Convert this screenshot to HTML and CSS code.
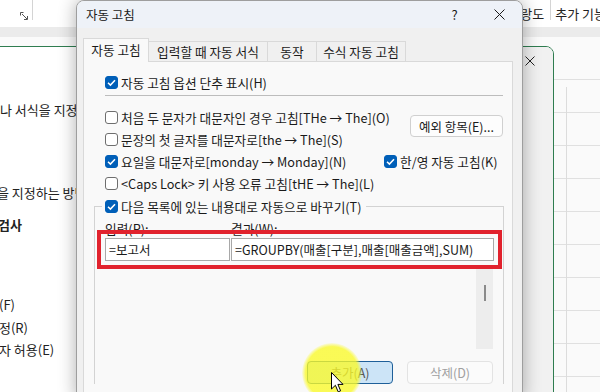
FILE: index.html
```html
<!DOCTYPE html>
<html>
<head>
    <title>자동 고침</title>
    <link rel="stylesheet" href="styles.css">
</head>
<body>
    <div class="screen">
        <header class="ribbon">
            <div class="rb-left">
                <svg class="launcher" width="8" height="8" viewBox="0 0 8 8">
                    <path d="M0.5 3.5 V0.5 H3.5 M2 2 L7 7 M4 7.5 H7.5 V4" fill="none" stroke="#555" stroke-width="1"/>
                </svg>
            </div>
            <div class="rb-right">
                <span class="rb-tab rb-sep">랑도</span>
                <span class="rb-tab">추가 기능</span>
            </div>
        </header>
        <div class="ribbon-foot"></div>
        <main class="sheet"></main>

        <section class="options-win">
            <div class="ow-content">
                <p class="ow-line l1">나 서식을 지정하는 방법을 변경합니다.</p>
                <p class="ow-line l2">을 지정하는 방법</p>
                <p class="ow-line l3">검사</p>
                <p class="ow-line l4">(F)</p>
                <p class="ow-line l5">정(R)</p>
                <p class="ow-line l6">자 허용(E)</p>
            </div>
            <div class="ow-gutter">
                <svg width="10" height="10" viewBox="0 0 10 10">
                    <path d="M0.5 0.5 L9.5 9.5 M9.5 0.5 L0.5 9.5" stroke="#222" stroke-width="1"/>
                </svg>
            </div>
        </section>

        <section class="dialog">
            <div class="titlebar">
                <span class="title">자동 고침</span>
                <div class="tb-buttons">
                    <span class="tb-btn">?</span>
                    <span class="tb-btn">
                        <svg width="11" height="11" viewBox="0 0 11 11">
                            <path d="M0.5 0.5 L10.5 10.5 M10.5 0.5 L0.5 10.5" stroke="#1a1a1a" stroke-width="1"/>
                        </svg>
                    </span>
                </div>
            </div>
            <div class="dlg-body">
                <div class="tabs">
                    <span class="tab active">자동 고침</span>
                    <span class="tab">입력할 때 자동 서식</span>
                    <span class="tab">동작</span>
                    <span class="tab">수식 자동 고침</span>
                </div>
                <div class="panel">
                    <label class="opt first">
                        <span class="cb on"><svg viewBox="0 0 13 13"><path d="M3 6.8 L5.4 9.1 L10 4.2" fill="none" stroke="#fff" stroke-width="1.5"/></svg></span>
                        자동 고침 옵션 단추 표시(H)
                    </label>
                    <div class="sep"></div>
                    <div class="opt-grid">
                        <label class="opt">
                            <span class="cb"></span>
                            처음 두 문자가 대문자인 경우 고침[THe → The](O)
                        </label>
                        <button class="btn except">예외 항목(E)...</button>
                        <label class="opt">
                            <span class="cb"></span>
                            문장의 첫 글자를 대문자로[the → The](S)
                        </label>
                        <label class="opt">
                            <span class="cb on"><svg viewBox="0 0 13 13"><path d="M3 6.8 L5.4 9.1 L10 4.2" fill="none" stroke="#fff" stroke-width="1.5"/></svg></span>
                            요일을 대문자로[monday → Monday](N)
                        </label>
                        <label class="opt">
                            <span class="cb on"><svg viewBox="0 0 13 13"><path d="M3 6.8 L5.4 9.1 L10 4.2" fill="none" stroke="#fff" stroke-width="1.5"/></svg></span>
                            한/영 자동 고침(K)
                        </label>
                        <label class="opt wide">
                            <span class="cb"></span>
                            &lt;Caps Lock&gt; 키 사용 오류 고침[tHE → The](L)
                        </label>
                    </div>
                    <fieldset class="replace">
                        <legend class="opt">
                            <span class="cb on"><svg viewBox="0 0 13 13"><path d="M3 6.8 L5.4 9.1 L10 4.2" fill="none" stroke="#fff" stroke-width="1.5"/></svg></span>
                            다음 목록에 있는 내용대로 자동으로 바꾸기(T)
                        </legend>
                        <div class="fs-body">
                            <div class="two-col labels">
                                <span>입력(R):</span>
                                <span>결과(W):</span>
                            </div>
                            <div class="two-col inputs">
                                <div class="edit">=보고서</div>
                                <div class="edit">=GROUPBY(매출[구분],매출[매출금액],SUM)</div>
                            </div>
                            <div class="listbox">
                                <div class="vscroll"><div class="thumb"></div></div>
                            </div>
                            <div class="actions">
                                <button class="btn primary">추가(A)</button>
                                <button class="btn disabled">삭제(D)</button>
                            </div>
                        </div>
                    </fieldset>
                </div>
            </div>
        </section>

        <div class="cursor-spot"></div>
        <svg class="cursor" width="14" height="22" viewBox="0 0 14 22">
            <path d="M0.5 0.5 V17 L4.4 13.3 L7.2 19.8 L9.6 18.8 L6.9 12.4 L12 12.4 Z" fill="#fff" stroke="#000" stroke-width="1"/>
        </svg>
    </div>
</body>
</html>
```

FILE: styles.css
```css
* {
    box-sizing: border-box;
}
body {
    margin: 0;
    font-family: "Noto Sans CJK KR", "Noto Sans", sans-serif;
    font-size: 12px;
    color: #1a1a1a;
    background: #fff;
}
.screen {
    position: relative;
    width: 600px;
    height: 392px;
    overflow: hidden;
    display: flex;
    flex-direction: column;
}

/* excel ribbon behind */
.ribbon {
    height: 27px;
    display: flex;
    justify-content: space-between;
    background: #fff;
}
.rb-left {
    width: 33px;
    height: 20px;
    border-right: 1px solid #d4d4d4;
    display: flex;
    align-items: flex-end;
    padding-left: 20px;
}
.launcher {
    display: block;
}
.rb-right {
    display: flex;
    align-items: flex-start;
    margin-right: -6px;
    font-size: 13px;
}
.rb-tab {
    height: 20px;
    line-height: 28px;
    padding-left: 4px;
    color: #222;
    white-space: nowrap;
}
.rb-sep {
    padding-right: 6px;
    border-right: 1px solid #d4d4d4;
}
.ribbon-foot {
    height: 10px;
    background: #ebebeb;
}
.sheet {
    flex: 1;
    background-color: #fafafa;
    background-image:
        linear-gradient(to right, transparent 566px, #dcdcdc 566px, #dcdcdc 567px, transparent 567px),
        repeating-linear-gradient(to bottom, transparent 0 32px, #e0e0e0 32px 33px);
    background-position: 0 50px, 0 10px;
    background-repeat: no-repeat, repeat;
}

/* options window behind the dialog */
.options-win {
    position: absolute;
    left: -20px;
    top: 46px;
    width: 574px;
    height: 360px;
    border: 1px solid #2f7d50;
    border-radius: 0 8px 0 0;
    overflow: hidden;
    display: flex;
    background: #fff;
}
.ow-content {
    flex: 1;
    padding-left: 20px;
    font-size: 13px;
    color: #222;
}
.ow-line {
    margin: 0;
    height: 22px;
    line-height: 22px;
    white-space: nowrap;
}
.l1 { margin-top: 52px; margin-left: -1px; }
.l2 { margin-top: 61px; margin-left: -4px; }
.l3 { margin-top: 10px; margin-left: -3px; font-weight: bold; }
.l4 { margin-top: 58px; margin-left: -2px; }
.l5 { margin-top: 1px; margin-left: -2px; }
.l6 { margin-top: 0; margin-left: -2px; }
.ow-gutter {
    width: 46px;
    background: #f1f1f1;
    display: flex;
    justify-content: center;
    padding-top: 9px;
}
.ow-gutter svg {
    display: block;
}

/* autocorrect dialog */
.dialog {
    position: absolute;
    left: 76px;
    top: 0;
    width: 447px;
    height: 400px;
    border: 1px solid #9e9e9e;
    border-radius: 8px 8px 0 0;
    background: #f0f0f0;
    box-shadow: 0 0 18px rgba(0, 0, 0, 0.32);
    overflow: hidden;
    display: flex;
    flex-direction: column;
    font-size: 12.7px;
}
.titlebar {
    height: 27px;
    flex-shrink: 0;
    display: flex;
    justify-content: space-between;
    align-items: center;
    padding-left: 9px;
    background: #eef2f8;
}
.title {
    font-size: 12.5px;
}
.tb-buttons {
    display: flex;
    height: 100%;
}
.tb-btn {
    width: 45px;
    display: flex;
    align-items: center;
    justify-content: center;
    font-size: 13px;
}
.dlg-body {
    flex: 1;
    min-width: 0;
    width: 445px;
    padding: 10px 9px 0 6px;
    display: flex;
    flex-direction: column;
}
.tabs {
    display: flex;
    align-items: flex-end;
    height: 23px;
}
.tab {
    height: 20px;
    line-height: 19px;
    text-align: center;
    background: #f0f0f0;
    border: 1px solid #d9d9d9;
    border-left: none;
    border-bottom: none;
    white-space: nowrap;
}
.tab.active {
    height: 24px;
    line-height: 22px;
    margin-bottom: -1px;
    background: #f9f9f9;
    border-left: 1px solid #d9d9d9;
    position: relative;
    z-index: 1;
}
.tab:nth-child(1) { width: 66px; }
.tab:nth-child(2) { width: 119px; }
.tab:nth-child(3) { width: 49px; }
.tab:nth-child(4) { width: 89px; }
.panel {
    flex: 1;
    width: 430px;
    min-width: 0;
    overflow: hidden;
    border: 1px solid #d9d9d9;
    background: #f9f9f9;
    padding: 9px 8px 0 10px;
}
.opt {
    display: flex;
    align-items: center;
    gap: 3px;
    height: 22px;
    white-space: nowrap;
}
.opt.first {
    margin-left: 11px;
}
.cb {
    width: 13px;
    height: 13px;
    flex-shrink: 0;
    border: 1px solid #6e6e6e;
    border-radius: 3px;
    background: #fff;
}
.cb.on {
    border-color: #005fb8;
    background: #005fb8;
}
.cb svg {
    display: block;
    width: 13px;
    height: 13px;
    margin: -1px;
}
.sep {
    height: 1px;
    margin: 2px 1px 10px 11px;
    background: #bdbdbd;
}
.opt-grid {
    display: grid;
    grid-template-columns: minmax(0, 1fr) 120px;
    grid-template-rows: repeat(4, 22px);
    margin-left: 11px;
}
.opt-grid .wide {
    grid-column: 1 / 3;
}
.btn {
    font-family: inherit;
    font-size: 12.5px;
    height: 22px;
    border: 1px solid #d0d0d0;
    border-radius: 4px;
    background: #fdfdfd;
    color: #1a1a1a;
    padding: 0;
}
.except {
    grid-row: 1 / 3;
    grid-column: 2;
    align-self: start;
    justify-self: end;
    width: 93px;
    margin-top: 9px;
    margin-right: 1px;
}
.replace {
    margin: 1px 0 0;
    padding: 0 9px 0 7px;
    border: 1px solid #d3d3d3;
    border-bottom: none;
    min-width: 0;
    width: 410px;
}
.replace legend {
    padding: 0 4px 0 3px;
}
.fs-body {
    margin-left: 3px;
}
.two-col {
    display: grid;
    grid-template-columns: 126px minmax(0, 1fr);
}
.labels {
    margin-top: 5px;
    height: 14px;
    line-height: 14px;
}
.inputs {
    margin-top: 2px;
    outline: 4px solid #e1222d;
    outline-offset: 4px;
    position: relative;
    z-index: 1;
    font-size: 12.5px;
}
.edit {
    height: 23px;
    line-height: 21px;
    padding-left: 3px;
    border: 1px solid #a8a8a8;
    background: #fff;
    white-space: nowrap;
    overflow: hidden;
}
.edit:first-child {
    width: 125px;
}
.listbox {
    height: 86px;
    margin-top: 2px;
    display: flex;
    justify-content: flex-end;
    padding-top: 5px;
}
.vscroll {
    width: 17px;
    margin-right: 1px;
    background: #ededed;
    display: flex;
    justify-content: center;
    padding-top: 17px;
}
.thumb {
    width: 2px;
    height: 16px;
    background: #8a8a8a;
}
.actions {
    display: flex;
    justify-content: flex-end;
    gap: 14px;
    margin-top: 12px;
    margin-right: 1px;
}
.actions .btn {
    width: 86px;
    height: 23px;
}
.btn.primary {
    background: #cce4f7;
    border-color: #1e5f99;
    color: #555;
}
.btn.disabled {
    background: #fbfbfb;
    border-color: #e3e3e3;
    color: #a0a0a0;
}

/* recording cursor highlight */
.cursor-spot {
    position: absolute;
    left: 302px;
    top: 343px;
    width: 60px;
    height: 60px;
    border-radius: 50%;
    background: radial-gradient(circle, rgba(250, 250, 40, 0.78) 62%, rgba(250, 250, 40, 0) 72%);
}
.cursor {
    position: absolute;
    left: 331px;
    top: 372px;
}
```
